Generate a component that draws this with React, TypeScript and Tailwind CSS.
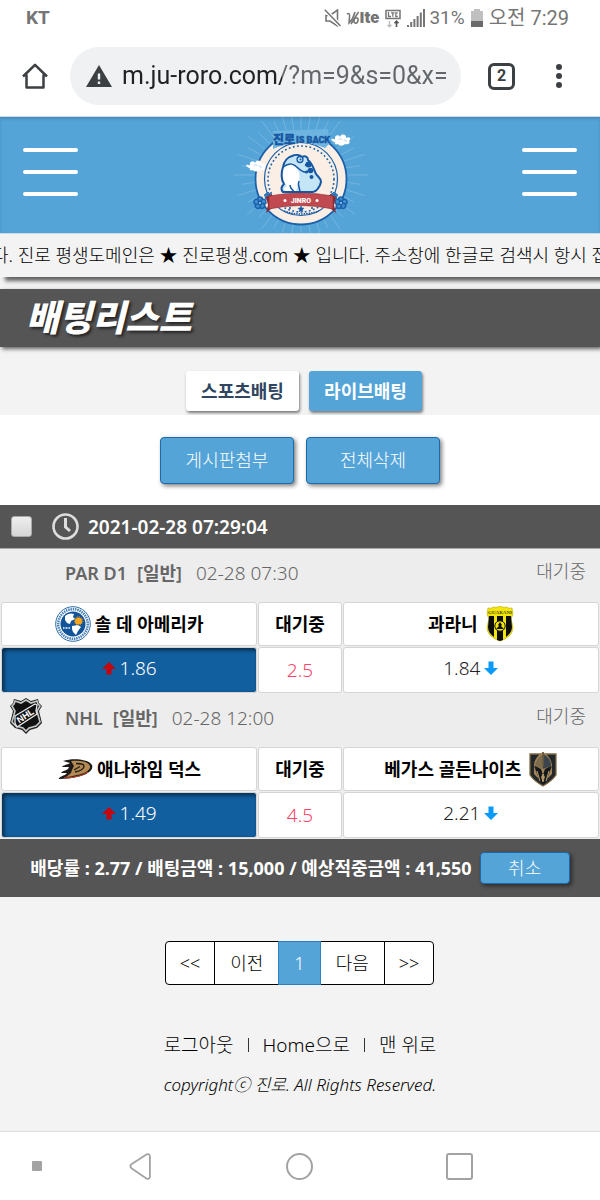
import type { ReactNode } from "react";

type Match = {
  league: string;
  leagueIcon?: ReactNode;
  time: string;
  status: string;
  home: string;
  homeLogo: ReactNode;
  away: string;
  awayLogo: ReactNode;
  homeOdds: string;
  line: string;
  awayOdds: string;
};

const SANS = "font-['Noto_Sans','Noto_Sans_CJK_KR',sans-serif]";

/* ---------- status and browser bars ---------- */

function StatusBar() {
  return (
    <div className="flex h-9 items-center justify-between pr-[31px] pl-[26px] text-[#757575]">
      <span className="font-['Roboto',sans-serif] text-[19px] leading-9 font-bold">KT</span>
      <div className="flex items-center gap-1">
        <svg className="size-[18px]" viewBox="0 0 18 18" fill="none" stroke="currentColor" strokeWidth="1.6" aria-hidden="true">
          <path d="M2 6.500h4L13.500 1v16L6 12H2z" />
          <path d="M.8.8 16.500 17" stroke="#fff" strokeWidth="4" />
          <path d="M.8.8 16.500 17" />
        </svg>
        <span className="flex items-center">
          <svg className="h-[14px] w-[14px]" viewBox="0 0 14 14" fill="none" stroke="currentColor" strokeWidth="1.5" aria-hidden="true">
            <path d="M1 3c2-1 3 0 2.500 3L3 12C6 9 8 5 9 1M12.500 1 5 13" />
            <ellipse cx="10" cy="9.500" rx="2" ry="2.700" transform="rotate(20 10 9.500)" />
          </svg>
          <b className="font-['Inter',sans-serif] text-[15px] leading-5 font-black">lte</b>
        </span>
        <svg className="ml-[2px] h-[19px] w-4" viewBox="0 0 16 19" fill="none" aria-hidden="true">
          <path d="M1 1.500h14v8H1z" stroke="#757575" strokeWidth="1.500" />
          <path d="M3.500 3v4.500H6M6 3.800h3.500M7.800 3.800v4M12.800 3.800h-2v3.700h2" stroke="#757575" strokeWidth="1.300" />
          <path d="M4.500 12v6M2.500 15.800l2 2 2-2" stroke="#bbb" strokeWidth="1.300" />
          <path d="M11.500 18v-6M9.500 14.200l2-2 2 2" stroke="#555" strokeWidth="1.600" />
        </svg>
        <svg className="ml-[2px] h-[18px] w-[18px]" viewBox="0 0 18 18" fill="#757575" aria-hidden="true">
          <path d="M0 16h2v2H0zM3.200 13h2v5h-2zM6.400 10h2v8h-2zM9.600 7h2v11h-2zM12.800 3.500h2V18h-2zM16 0h2v18h-2z" />
        </svg>
        <span className="font-['Roboto',sans-serif] text-[19px] leading-9">31%</span>
        <svg className="mx-[2px] h-[18px] w-3" viewBox="0 0 12 18" aria-hidden="true">
          <path d="M3 0h6v2h3v10H0V2h3z" fill="#c0c0c0" />
          <path d="M0 12h12v6H0z" fill="#6b6b6b" />
        </svg>
        <span className="font-['Roboto','Noto_Sans_CJK_KR',sans-serif] text-[20px] leading-9">오전 7:29</span>
      </div>
    </div>
  );
}

function BrowserBar() {
  return (
    <div className="flex h-20 items-center pr-[33px] pl-[22px] text-[#3c4043]">
      <button type="button" aria-label="홈">
        <svg className="size-[26px]" viewBox="0 0 26 26" fill="none" stroke="currentColor" strokeWidth="2.500" strokeLinejoin="round" aria-hidden="true">
          <path d="M1 13.500 13 1.800 25 13.500M4.500 11.500V24.500h17V11.500" />
        </svg>
      </button>
      <div className="ml-[22px] flex h-[58px] min-w-0 flex-1 items-center rounded-full bg-[#f0f1f3] pr-3 pl-4">
        <svg className="h-6 w-[26px] shrink-0" viewBox="0 0 26 24" fill="currentColor" aria-hidden="true">
          <path fillRule="evenodd" d="M13 1 26 23H0zM11.800 9.500v6h2.400v-6zM11.800 17.500v2.400h2.400v-2.400z" />
        </svg>
        <input
          type="text"
          aria-label="주소창"
          defaultValue="m.ju-roro.com/?m=9&s=0&x="
          className="ml-[10px] min-w-0 flex-1 bg-[linear-gradient(90deg,#202124_160px,#63676b_160px)] bg-clip-text font-['Roboto',sans-serif] text-[25px] leading-8 text-transparent caret-black outline-none"
        />
      </div>
      <button type="button" aria-label="탭 2개" className="ml-[27px] flex size-[27px] items-center justify-center rounded-md border-[3px] border-current font-['Roboto',sans-serif] text-[16px] leading-5 font-bold">
        2
      </button>
      <button type="button" aria-label="메뉴" className="ml-9 flex w-4 flex-col items-center gap-[3px] py-2">
        <i className="size-[6px] rounded-full bg-current" />
        <i className="size-[6px] rounded-full bg-current" />
        <i className="size-[6px] rounded-full bg-current" />
      </button>
    </div>
  );
}

/* ---------- site header ---------- */

const RAYS = Array.from({ length: 40 }, (_, i) => {
  const a = (i * Math.PI) / 20;
  const far = i % 2 ? 60 : 67;
  return {
    x1: 71 + 44 * Math.cos(a),
    y1: 60 + 44 * Math.sin(a),
    x2: 71 + far * Math.cos(a),
    y2: 60 + far * Math.sin(a),
  };
});

function Cloud({ x, y }: { x: number; y: number }) {
  return (
    <g transform={`translate(${x} ${y})`}>
      <path d="M0 5c2-1 3 1 4 0-1-4 4-5 5-2 1-4 7-3 6 1 3-2 6 1 3 3 2 2-1 4-4 3-2 2-6 2-7 0-2 1-4 0-3-2-2 0-3-1-4-3z" fill="#fff" />
      <path d="M8 6c0-2 3-2 3 0M13 7c0-2 3-1 2 1" stroke="#9fcbe8" strokeWidth=".7" fill="none" />
    </g>
  );
}

function Flower({ x, y, r }: { x: number; y: number; r: number }) {
  return (
    <g transform={`translate(${x} ${y}) scale(${r})`} fill="#3e8fd0" stroke="#1b61a9" strokeWidth=".25">
      {[0, 72, 144, 216, 288].map((a) => (
        <circle key={a} cx="0" cy="-.6" r=".42" transform={`rotate(${a})`} />
      ))}
      <circle r=".28" fill="#a9d5f2" />
    </g>
  );
}

function SiteLogo() {
  return (
    <svg className="h-[116px] w-[140px]" viewBox="0 2 140 116" role="img" aria-label="진로 IS BACK">
      <g stroke="#fff" strokeOpacity=".18" strokeWidth="1">
        {RAYS.map((r, i) => (
          <line key={i} {...r} />
        ))}
      </g>
      <circle cx="71" cy="64" r="45.500" fill="#fbeee5" stroke="#1b61a9" strokeWidth="1.800" />
      <circle cx="71" cy="64" r="36.500" fill="#fbeee5" stroke="#1b61a9" strokeWidth="1.200" />
      <circle cx="71" cy="64" r="33" fill="none" stroke="#1b61a9" strokeWidth="1.600" strokeDasharray="1.800 2.400" />
      <path d="M43 16 98 14l2 14-5 5q-24-10-47-1l-5 2z" fill="#6db4e1" />
      <g fill="#1757a2" stroke="#1757a2" strokeWidth=".4">
        <text x="43" y="29" className="font-['Noto_Sans_CJK_KR',sans-serif] text-[12px] font-black">진로</text>
        <text x="66" y="28" className="font-['Roboto',sans-serif] text-[9px] font-black">IS BACK</text>
      </g>
      <path d="M53 52c1-6 5-10 9-11 4-2 8-1 10 1 3-2 6 0 6 3 4 3 6 9 8 14 2 3 5 4 5 8-1 5-5 10-8 10H53c-3-3-1-6 1-8-3-4-3-12-1-17z" fill="#c4e5f6" stroke="#1757a2" strokeWidth="2" strokeLinejoin="round" />
      <path d="M54 54c4-6 9-7 12-1 5 5 4 11 1 19l-1 4H55c-2-2 0-4 2-5-4-5-5-11-3-17z" fill="#fff" />
      <path d="M53 52c7-5 11-3 15 1s7 5 10 3M60 70c0 5 4 5 4 7M69 66c-2 4 1 7 1 11" fill="none" stroke="#1757a2" strokeWidth="1.500" />
      <circle cx="70" cy="44.500" r="3" fill="#c4e5f6" stroke="#1757a2" strokeWidth="1.300" />
      <circle cx="70.500" cy="44.500" r="1" fill="#1757a2" />
      <g fill="#1757a2">
        <circle cx="78.500" cy="49.500" r="3" />
        <circle cx="80.500" cy="55.500" r="2.800" />
        <circle cx="76.500" cy="57" r="1.600" />
        <circle cx="81.500" cy="62" r="2" />
        <circle cx="76" cy="50" r="1.200" />
      </g>
      <path d="M54 96q17 6 35 0" fill="none" stroke="#1757a2" strokeWidth="1.500" strokeDasharray="1.500 1" />
      <path d="m71 91 1 2 2 .2-1.500 1.500.4 2-1.900-1-1.900 1 .4-2L68 93.200l2-.2zM60 92l1 1-1 1-1-1zM82 92l1 1-1 1-1-1z" fill="#1757a2" stroke="#1757a2" strokeWidth=".5" />
      <Flower x={30} y={88} r={6} />
      <Flower x={111} y={88} r={6} />
      <Flower x={38} y={81} r={3.500} />
      <Flower x={104} y={81} r={3.500} />
      <path d="m36 82 6-3v14l-6 5 2-8zM106 82l-6-3v14l6 5-2-8z" fill="#8d2b32" />
      <path d="M39 81q32-6 64 0v13q-32-7-64 0z" fill="#c04a50" stroke="#8d2b32" strokeWidth=".6" />
      <text x="71" y="88" textAnchor="middle" fill="#fff" className="font-['Roboto',sans-serif] text-[7px] font-black">JINRO</text>
      <circle cx="55" cy="85.500" r="1.500" fill="#fff" />
      <circle cx="87" cy="85.500" r="1.500" fill="#fff" />
      <Cloud x={16} y={45} />
      <Cloud x={101} y={19} />
    </svg>
  );
}

function MenuButton({ label }: { label: string }) {
  return (
    <button type="button" aria-label={label} className="mb-[6px] flex w-[55px] flex-col gap-[18px]">
      <i className="h-1 w-full rounded-full bg-white" />
      <i className="h-1 w-full rounded-full bg-white" />
      <i className="h-1 w-full rounded-full bg-white" />
    </button>
  );
}

/* ---------- team and league marks ---------- */

function NhlLogo() {
  return (
    <svg className="h-9 w-[34px]" viewBox="0 0 34 36" role="img" aria-label="NHL">
      <path d="M17 0 22 3 29 1l1 4 3 3-3 5 3 12-5 5-7 2-4 4-4-4-7-2-5-5 3-12-3-5 3-3 1-4 7 2z" fill="#222" />
      <path d="m17 2 5 3 6-2 1 3 2 2-3 5 3 11-4 4-7 2-3 3-3-3-7-2-4-4 3-11-3-5 2-2 1-3 6 2z" fill="#111" stroke="#c3c7c9" strokeWidth="1.600" />
      <path d="m6 18 20-12 2 1-1 6 1 3L8 29l-2-4z" fill="#111" stroke="#e6e8e9" strokeWidth="1.300" />
      <text x="16.500" y="20.500" textAnchor="middle" transform="rotate(-33 17 18)" fill="#fff" className="font-['Liberation_Sans',sans-serif] text-[9px] font-bold">NHL</text>
    </svg>
  );
}

function SolLogo() {
  return (
    <svg className="size-9" viewBox="0 0 36 36" role="img" aria-label="Sol de América">
      <circle cx="18" cy="18" r="17.300" fill="#fff" stroke="#2b6ba8" strokeWidth="1" />
      <circle cx="18" cy="18" r="14.800" fill="none" stroke="#4a82b8" strokeWidth="2.600" strokeDasharray="1.500 .8" />
      <circle cx="18" cy="18" r="12.500" fill="#11549a" />
      <path d="M10 10c3-3 7-3 9-2l-1 3 2 2-4 2-1 3-3-1-2-3zM17 20l6-1 3 2-3 4-2 4-3-3-1-3z" fill="#fff" />
      <path d="M8 22h7" stroke="#fff" strokeWidth="1.400" strokeDasharray="1 .5" />
      <circle cx="23.500" cy="15" r="3.600" fill="#f7a51c" />
      <circle cx="23.500" cy="15" r="4.200" fill="none" stroke="#f7a51c" strokeWidth="1" strokeDasharray="1 1" />
    </svg>
  );
}

function GuaraniLogo() {
  return (
    <svg className="h-9 w-7" viewBox="0 0 28 36" role="img" aria-label="Guaraní">
      <path d="M2 2q4 1 5-1 4 1 7-1 3 2 7 1 1 2 5 1l1 6-2 5 2 8c0 8-7 12-13 14C8 33 1 29 1 21l2-8-2-5z" fill="#f1e50b" stroke="#b5aa00" strokeWidth=".6" />
      <path d="M3 10h5v21c-4-3-6-6-6-10zM11 10h6v24l-3 1-3-1zM20 10h5l1 11c0 4-2 7-6 10z" fill="#0d0d0d" />
      <circle cx="14" cy="20" r="5.200" fill="#f1e50b" stroke="#111" strokeWidth="1" />
      <path d="m14 16 2 3-1 1 3 3h-8l3-3-1-1z" fill="#111" />
      <text x="14" y="8" textAnchor="middle" fill="#4a4600" className="font-['Liberation_Serif',serif] text-[5px] font-bold">GUARANI</text>
    </svg>
  );
}

function DucksLogo() {
  return (
    <svg className="h-6 w-9" viewBox="0 0 36 24" role="img" aria-label="Anaheim Ducks">
      <path d="M6 4C16 1 31 2 35 8c2 5-5 10-15 12-5 1-11 2-18 2-1-1 3-3 6-4l2-2H4c1-2 4-2 7-4l1-2H5c1-2 5-2 8-4z" fill="#1c1a18" />
      <path d="M14 4c8-1 17 0 19 5 1 4-6 8-13 9-5 1-8 2-11 2l5-4 1-3 2-4z" fill="#b48a52" />
      <path d="M7 20.800c7 0 17-1 24-6" fill="none" stroke="#c8432a" strokeWidth="1" />
      <path d="M19 6.500c5 0 8 1 8 2.500 0 3-4 5-9 6" fill="none" stroke="#1c1a18" strokeWidth="1.300" />
      <path d="m17 13 6-3.500" stroke="#1c1a18" strokeWidth="1.200" />
    </svg>
  );
}

function KnightsLogo() {
  return (
    <svg className="h-9 w-7" viewBox="0 0 28 36" role="img" aria-label="Vegas Golden Knights">
      <path d="M1 3h26v21q-4 6-13 11Q5 30 1 24z" fill="#22272a" stroke="#806a43" strokeWidth="1.300" />
      <path d="M14 1C9 4 5 9 5 15v8l5 5-5-13 7 4 2 9 2-9 7-4-5 13 5-5v-8c0-6-4-11-9-14z" fill="#a38557" />
      <path d="M14 3c6 3 8 7 8 12l-8 3z" fill="#39444c" />
      <path d="M14 3C9 6 7 10 6 15l8 3z" fill="#7d6c4e" />
      <path d="m6 15 6 3 2 6 2-6 6-3-6 17-2 1-2-1z" fill="#15181a" />
      <path d="m14 23 1.300 3L14 31l-1.300-5zM20 20l-3 10M8 20l3 10" stroke="#b99c6b" strokeWidth="1" fill="#b99c6b" />
      <path d="M14 1v14" stroke="#6b5a3b" strokeWidth="1.600" />
    </svg>
  );
}

function OddsArrow({ up = false }: { up?: boolean }) {
  return (
    <svg className="size-[14px]" viewBox="0 0 14 14" role="img" aria-label={up ? "상승" : "하락"}>
      {up ? (
        <path d="M7 1 14 8H9.500v5.500h-5V8H0z" fill="#c8040b" />
      ) : (
        <path d="M7 14 0 7h4.500V.5h5V7H14z" fill="#0b9af8" />
      )}
    </svg>
  );
}

/* ---------- bet slip ---------- */

const MATCHES: Match[] = [
  {
    league: "PAR D1",
    time: "02-28 07:30",
    status: "대기중",
    home: "솔 데 아메리카",
    homeLogo: <SolLogo />,
    away: "과라니",
    awayLogo: <GuaraniLogo />,
    homeOdds: "1.86",
    line: "2.5",
    awayOdds: "1.84",
  },
  {
    league: "NHL",
    leagueIcon: <NhlLogo />,
    time: "02-28 12:00",
    status: "대기중",
    home: "애나하임 덕스",
    homeLogo: <DucksLogo />,
    away: "베가스 골든나이츠",
    awayLogo: <KnightsLogo />,
    homeOdds: "1.49",
    line: "4.5",
    awayOdds: "2.21",
  },
];

const TEAM_CELL = "h-11 rounded-[3px] border border-[#d5d5d5] bg-white p-0 text-center font-bold";
const ODDS_CELL = "h-[46px] rounded-[3px] border border-[#d5d5d5] bg-white p-0 text-center font-light";

function MatchBlock({ match }: { match: Match }) {
  return (
    <section>
      <div className="flex h-[52px] items-center pr-[14px] pb-1 pl-[9px] text-[#666]">
        <span className="flex w-14 shrink-0 pb-1">{match.leagueIcon}</span>
        <h3 className="font-semibold">
          {match.league}
          <span className="ml-[10px]">[일반]</span>
        </h3>
        <span className="ml-[14px] text-[19px] font-light">{match.time}</span>
        <span className="ml-auto pb-1 font-light">{match.status}</span>
      </div>
      <table className="w-full table-fixed border-separate border-spacing-[1px]">
        <colgroup>
          <col className="w-[43%]" />
          <col className="w-[14%]" />
          <col className="w-[43%]" />
        </colgroup>
        <tbody>
          <tr className="text-black">
            <td className={TEAM_CELL}>
              <span className="flex items-center justify-center gap-1">
                {match.homeLogo}
                {match.home}
              </span>
            </td>
            <td className={TEAM_CELL}>{match.status}</td>
            <td className={TEAM_CELL}>
              <span className="flex items-center justify-center gap-2">
                {match.away}
                {match.awayLogo}
              </span>
            </td>
          </tr>
          <tr className="text-[19px] text-[#222]">
            <td className="h-[46px] rounded-[3px] border border-[#d5d5d5] bg-[#125f9f] p-0 pb-1 text-center font-light text-white shadow-[inset_2px_2px_4px_rgba(0,0,0,0.6)]">
              <span className="flex items-center justify-center gap-1">
                <OddsArrow up />
                {match.homeOdds}
              </span>
            </td>
            <td className={ODDS_CELL}>
              <span className="text-[#ff4468]">{match.line}</span>
            </td>
            <td className={`${ODDS_CELL} pb-1`}>
              <span className="flex items-center justify-center gap-1">
                {match.awayOdds}
                <OddsArrow />
              </span>
            </td>
          </tr>
        </tbody>
      </table>
    </section>
  );
}

function BetSlip() {
  return (
    <article className="bg-[#ededed] text-[18px] leading-6">
      <header className="flex h-11 items-center border-b border-[#aaa] bg-[#555] pl-[11px] text-white">
        <input
          type="checkbox"
          aria-label="배팅 선택"
          className="size-[21px] appearance-none rounded-[3px] border border-[#aaa] bg-linear-to-b from-[#eee] to-[#d6d6d6] checked:bg-[#54a4d8]"
        />
        <svg className="ml-5 size-[27px]" viewBox="0 0 27 27" fill="none" stroke="#ddd" strokeWidth="2.600" aria-hidden="true">
          <circle cx="13.500" cy="13.500" r="12" />
          <path d="M13.500 5v9l4.500 4" strokeWidth="3" />
        </svg>
        <time className="ml-[9px] text-[19px] font-semibold">2021-02-28 07:29:04</time>
      </header>
      {MATCHES.map((m) => (
        <MatchBlock key={m.league} match={m} />
      ))}
      <footer className="flex h-[58px] items-center justify-center gap-2 bg-[#555] font-bold text-white">
        <span className="whitespace-nowrap">배당률 : 2.77 / 배팅금액 : 15,000 / 예상적중금액 : 41,550</span>
        <button type="button" className="h-8 w-[90px] rounded border border-[#1d68ab] bg-[#54a4d8] font-light shadow-[2px_2px_4px_rgba(0,0,0,0.5)]">
          취소
        </button>
      </footer>
    </article>
  );
}

const ACTION = "h-[47px] w-[134px] rounded border border-[#1d68ab] bg-[#54a4d8] text-[18px] font-light text-white shadow-[2px_2px_4px_rgba(0,0,0,0.5)]";
const TAB = "h-10 w-[113px] rounded-[3px] text-[18px] leading-6 font-bold shadow-[1px_2px_3px_rgba(0,0,0,0.5)]";
const PAGE = "-ml-px flex h-11 items-center border text-[18px] leading-6 font-light";

export default function App() {
  return (
    <div className={`flex min-h-screen flex-col bg-[#f3f3f3] ${SANS}`}>
      <div className="bg-white">
        <StatusBar />
        <BrowserBar />
      </div>

      <header className="flex h-[118px] items-center justify-between border-y border-[#c9dce8] bg-[#54a4d8] px-[23px] shadow-[inset_0_2px_3px_rgba(0,0,0,0.15)]">
        <MenuButton label="왼쪽 메뉴" />
        <SiteLogo />
        <MenuButton label="오른쪽 메뉴" />
      </header>

      <div className="overflow-hidden pb-3">
        <div className="h-[43px] bg-[#f3f3f3] shadow-[5px_4px_4px_rgba(0,0,0,0.6)]">
          <p className="-ml-2 text-[18px] leading-[42px] font-light whitespace-nowrap text-black">
            다. 진로 평생도메인은 ★ 진로평생.com ★ 입니다. 주소창에 한글로 검색시 항시 접
          </p>
        </div>
      </div>

      <h1 className="h-[58px] bg-[#555] pl-[26px] font-['Noto_Sans_CJK_KR',sans-serif] text-[36px] leading-[52px] font-black text-white italic shadow-[2px_2px_4px_rgba(0,0,0,0.6)] text-shadow-[2px_2px_3px_rgba(0,0,0,0.6)]">
        배팅리스트
      </h1>

      <nav className="flex h-[68px] items-end justify-center gap-[10px] pb-1 pl-2">
        <button type="button" className={`${TAB} bg-white text-[#2f4560]`}>스포츠배팅</button>
        <button type="button" className={`${TAB} bg-[#54a4d8] text-white`}>라이브배팅</button>
      </nav>

      <div className="flex h-[90px] items-center justify-center gap-3 bg-white">
        <button type="button" className={ACTION}>게시판첨부</button>
        <button type="button" className={ACTION}>전체삭제</button>
      </div>

      <BetSlip />

      <nav aria-label="페이지" className="mt-11 flex justify-center">
        <a href="#first" className={`${PAGE} rounded-l border-black bg-white px-[14px] text-black`}>&lt;&lt;</a>
        <a href="#prev" className={`${PAGE} border-black bg-white px-[15px] text-black`}>이전</a>
        <a href="#1" aria-current="page" className={`${PAGE} z-10 border-[#2f7fc0] bg-[#54a4d8] px-[15px] text-white`}>1</a>
        <a href="#next" className={`${PAGE} border-black bg-white px-[15px] text-black`}>다음</a>
        <a href="#last" className={`${PAGE} rounded-r border-black bg-white px-[14px] text-black`}>&gt;&gt;</a>
      </nav>

      <footer className="mt-11 flex flex-1 flex-col items-center pb-6 text-black">
        <div className="flex items-center gap-[14px] text-[19px] leading-8 font-light">
          <a href="#logout">로그아웃</a>
          <i className="h-[14px] w-px bg-[#333]" />
          <a href="#home">Home으로</a>
          <i className="h-[14px] w-px bg-[#333]" />
          <a href="#top">맨 위로</a>
        </div>
        <p className="mt-2 text-[17px] leading-8 font-light italic">copyrightⓒ 진로. All Rights Reserved.</p>
      </footer>

      <div className="flex h-[69px] items-center border-t border-[#dcdce2] bg-white text-[#a3a3a3]">
        <i className="ml-8 size-[10px] rounded-[1px] bg-current" />
        <button type="button" aria-label="뒤로" className="ml-[86px]">
          <svg className="h-[27px] w-6" viewBox="0 0 24 30" fill="none" stroke="currentColor" strokeWidth="2" strokeLinejoin="round" aria-hidden="true">
            <path d="M19.500 1.500 2.500 12.500q-2.500 2.200 0 4.400l17 11.600q3.300 1 3.500-2.500V4q-.2-3.500-3.500-2.500z" />
          </svg>
        </button>
        <button type="button" aria-label="홈 화면" className="mx-auto size-[27px] rounded-full border-2 border-current" />
        <button type="button" aria-label="최근 앱" className="mr-[127px] size-[27px] rounded-[3px] border-2 border-current" />
      </div>
    </div>
  );
}
